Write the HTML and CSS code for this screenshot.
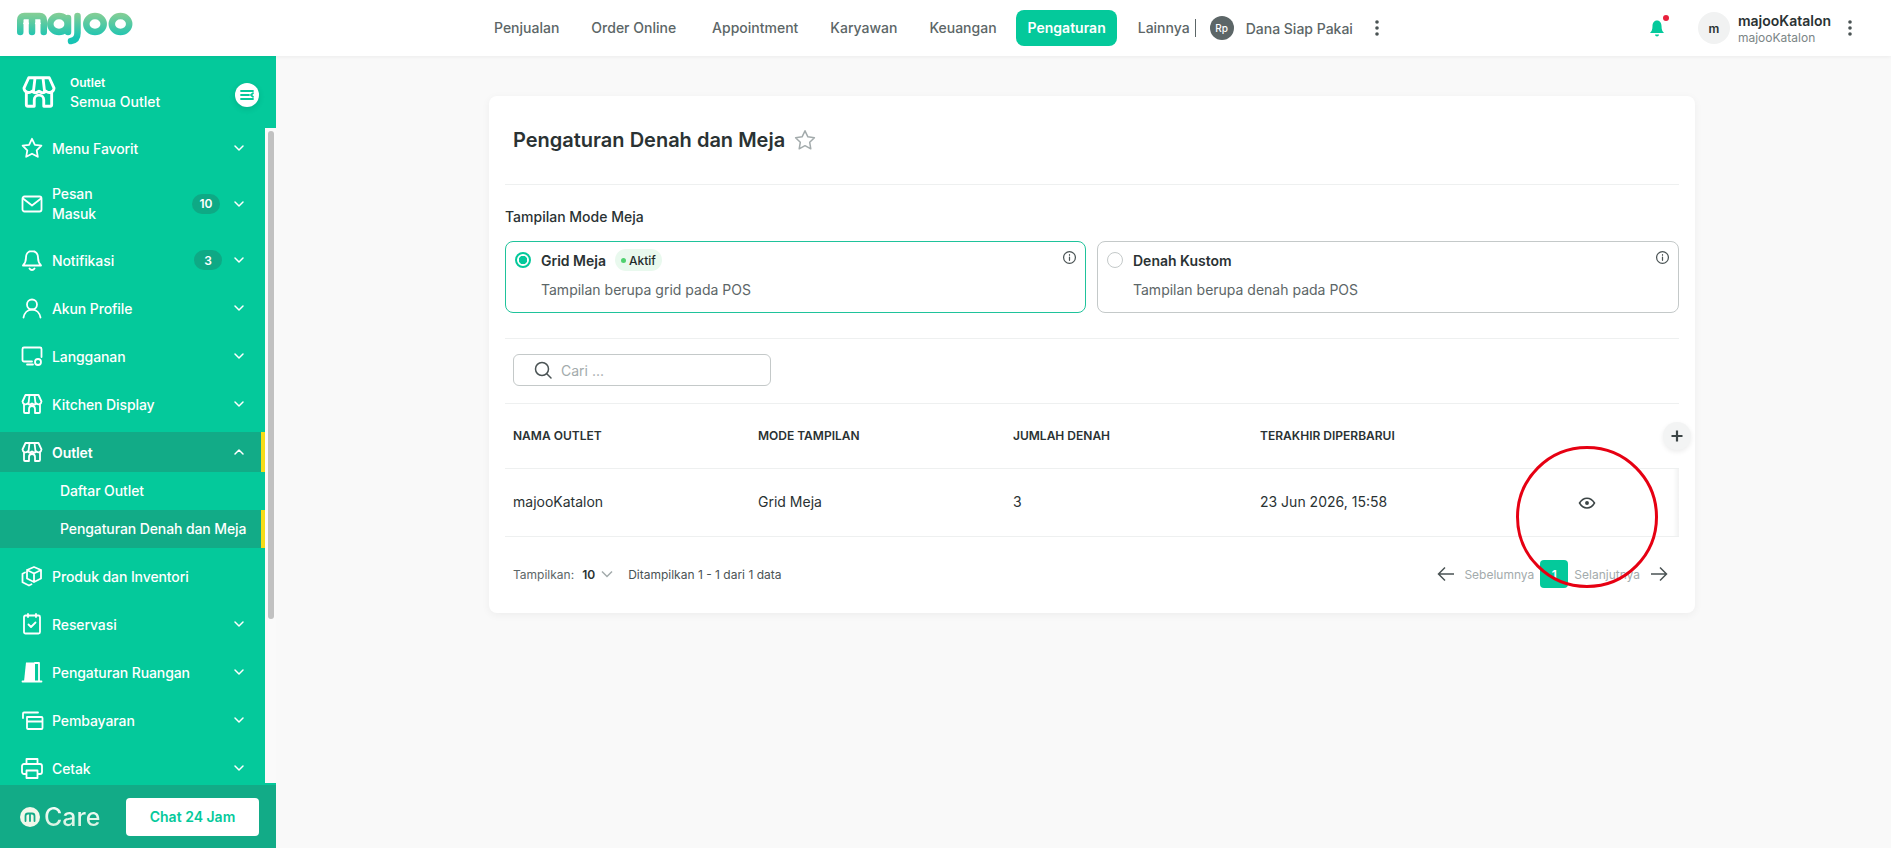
FILE: index.html
```html
<!DOCTYPE html>
<html lang="id">
<head>
    <meta charset="UTF-8">
    <meta name="viewport" content="width=device-width, initial-scale=1.0">
    <title>majoo - Pengaturan Denah dan Meja</title>
    <link rel="stylesheet" href="styles.css">
</head>
<body>
    <svg class="icon-defs" width="0" height="0" aria-hidden="true">
        <defs>
            <symbol id="i-chevron" viewBox="0 0 16 16"><path d="M4 6l4 4 4-4"/></symbol>
            <symbol id="i-store" viewBox="0 0 24 24"><path d="M5.5 3h13l3 6.500a3 3 0 0 1-5 2a3.500 3.500 0 0 1-4.500 0a3.500 3.500 0 0 1-4.500 0a3 3 0 0 1-5-2zM9.500 3l-1 8.500M14.500 3l1 8.500M4 12.500V20a1 1 0 0 0 1 1h4v-4a3 3 0 0 1 6 0v4h4a1 1 0 0 0 1-1v-7.500"/></symbol>
            <symbol id="i-dots" viewBox="0 0 6 18"><circle cx="3" cy="3" r="1.800"/><circle cx="3" cy="9" r="1.800"/><circle cx="3" cy="15" r="1.800"/></symbol>
            <symbol id="i-info" viewBox="0 0 16 16"><circle cx="8" cy="8" r="6.300"/><path d="M8 7.500v3.500M8 5v.6"/></symbol>
            <linearGradient id="logo-grad" gradientUnits="userSpaceOnUse" x1="0" y1="0" x2="0" y2="27">
                <stop offset="0" stop-color="#8fcf92"/>
                <stop offset="1" stop-color="#17c4b4"/>
            </linearGradient>
        </defs>
    </svg>

    <header class="topbar">
        <svg class="logo" width="117" height="34" viewBox="0 0 117 34" role="img" aria-label="majoo">
            <g fill="none" stroke="url(#logo-grad)" stroke-width="6.500" stroke-linecap="round">
                <path d="M3.250 21V9c0-2.500 1.500-4 4-4h15.500c2.500 0 4 1.500 4 4v12M15 8v13"/>
                <ellipse cx="42" cy="13" rx="8.700" ry="8"/>
                <path d="M51 7v14"/>
                <path d="M60.500 5v17c0 5-2.500 7.500-6.500 8"/>
                <ellipse cx="78" cy="13" rx="8.700" ry="8"/>
                <ellipse cx="103.500" cy="13" rx="8.700" ry="8"/>
            </g>
            <path d="M9.100 25V11M6.600 13l2.500-3 2.500 3M20.900 25V11M18.400 13l2.500-3 2.500 3" fill="none" stroke="#fff" stroke-width="1.600"/>
        </svg>
        <nav class="topnav">
            <a class="topnav-item">Penjualan</a>
            <a class="topnav-item">Order Online</a>
            <a class="topnav-item topnav-wide">Appointment</a>
            <a class="topnav-item">Karyawan</a>
            <a class="topnav-item">Keuangan</a>
            <a class="topnav-item active">Pengaturan</a>
            <a class="topnav-item topnav-more">Lainnya</a>
            <span class="topnav-sep"></span>
            <span class="rp-badge">Rp</span>
            <span class="dana-label">Dana Siap Pakai</span>
            <svg class="dots" width="6" height="18"><use href="#i-dots"/></svg>
        </nav>
        <div class="topbar-right">
            <div class="bell">
                <svg width="18" height="20" viewBox="0 0 18 20"><path d="M9 2.500c-3 0-4.500 2.500-4.500 5.500 0 4-1 5.500-2.500 7h14c-1.500-1.500-2.500-3-2.500-7 0-3-1.500-5.500-4.500-5.500zM7 16.500h4c0 1.300-1 2-2 2s-2-.7-2-2z"/></svg>
                <span class="bell-dot"></span>
            </div>
            <div class="avatar">m</div>
            <div class="user">
                <div class="user-name">majooKatalon</div>
                <div class="user-sub">majooKatalon</div>
            </div>
            <svg class="dots" width="6" height="18"><use href="#i-dots"/></svg>
        </div>
    </header>

    <div class="layout">
        <aside class="sidebar">
            <div class="outlet-head">
                <svg class="icon-line" width="38" height="38"><use href="#i-store"/></svg>
                <div class="outlet-text">
                    <div class="outlet-small">Outlet</div>
                    <div class="outlet-name">Semua Outlet</div>
                </div>
                <span class="outlet-toggle">
                    <svg width="14" height="14" viewBox="0 0 14 14"><path d="M1 3h12M1 7h8M1 11h12M13 5.200L11 7l2 1.800"/></svg>
                </span>
            </div>

            <div class="sidebar-body">
                <ul class="menu">
                    <li class="menu-row">
                        <svg class="menu-icon" viewBox="0 0 24 24"><path d="M12 2.800l2.900 6 6.500.9-4.700 4.600 1.100 6.500-5.800-3.100-5.800 3.100 1.100-6.500L2.600 9.700l6.500-.9z"/></svg>
                        <span class="menu-label">Menu Favorit</span>
                        <svg class="chev"><use href="#i-chevron"/></svg>
                    </li>
                    <li class="menu-row menu-tall">
                        <svg class="menu-icon" viewBox="0 0 24 24"><rect x="2.500" y="4.500" width="19" height="15" rx="2"/><path d="M3 6.500l9 7 9-7"/></svg>
                        <span class="menu-label">Pesan<br>Masuk</span>
                        <span class="count count-wide">10</span>
                        <svg class="chev"><use href="#i-chevron"/></svg>
                    </li>
                    <li class="menu-row">
                        <svg class="menu-icon" viewBox="0 0 24 24"><path d="M12 3c-3.800 0-6 3-6 6.500 0 5-1.500 6.500-3 8h18c-1.500-1.500-3-3-3-8C18 6 15.800 3 12 3zM9.500 20.500c.6 1 1.500 1.500 2.500 1.500s1.900-.5 2.500-1.500"/></svg>
                        <span class="menu-label">Notifikasi</span>
                        <span class="count">3</span>
                        <svg class="chev"><use href="#i-chevron"/></svg>
                    </li>
                    <li class="menu-row">
                        <svg class="menu-icon" viewBox="0 0 24 24"><circle cx="12" cy="8.500" r="5"/><path d="M3.500 21.500c.8-4.500 4-8 8.500-8s7.700 3.500 8.500 8"/></svg>
                        <span class="menu-label">Akun Profile</span>
                        <svg class="chev"><use href="#i-chevron"/></svg>
                    </li>
                    <li class="menu-row">
                        <svg class="menu-icon" viewBox="0 0 24 24"><path d="M12 17.500H4a1.500 1.500 0 0 1-1.500-1.500V5A1.500 1.500 0 0 1 4 3.500h16A1.500 1.500 0 0 1 21.500 5v8M7 20.500h6"/><circle cx="18" cy="18" r="3"/></svg>
                        <span class="menu-label">Langganan</span>
                        <svg class="chev"><use href="#i-chevron"/></svg>
                    </li>
                    <li class="menu-row">
                        <svg class="menu-icon"><use href="#i-store"/></svg>
                        <span class="menu-label">Kitchen Display</span>
                        <svg class="chev"><use href="#i-chevron"/></svg>
                    </li>
                    <li class="menu-group">
                        <div class="menu-row current">
                            <svg class="menu-icon"><use href="#i-store"/></svg>
                            <span class="menu-label menu-label-bold">Outlet</span>
                            <svg class="chev chev-up"><use href="#i-chevron"/></svg>
                        </div>
                        <div class="submenu-item">Daftar Outlet</div>
                        <div class="submenu-item current">Pengaturan Denah dan Meja</div>
                    </li>
                    <li class="menu-row">
                        <svg class="menu-icon" viewBox="0 0 24 24"><path d="M14 3l7 3v8.500l-7 3.500-7-3.500V6zM7 6l7 3.500L21 6M14 9.500V18M5 8.500l-2.500 1.200v8.500L9 21.500l2.500-1.200"/></svg>
                        <span class="menu-label">Produk dan Inventori</span>
                    </li>
                    <li class="menu-row">
                        <svg class="menu-icon" viewBox="0 0 24 24"><rect x="4" y="3.500" width="16" height="18" rx="1.500"/><path d="M8 2v3M16 2v3M8.500 12.500l2.500 2.500 4.500-4.500"/></svg>
                        <span class="menu-label">Reservasi</span>
                        <svg class="chev"><use href="#i-chevron"/></svg>
                    </li>
                    <li class="menu-row">
                        <svg class="menu-icon" viewBox="0 0 24 24"><path class="icon-solid" d="M4 21.500L6 2.500h9v19z"/><path d="M15 3h4v18.500M2.500 21.500h19"/></svg>
                        <span class="menu-label">Pengaturan Ruangan</span>
                        <svg class="chev"><use href="#i-chevron"/></svg>
                    </li>
                    <li class="menu-row">
                        <svg class="menu-icon" viewBox="0 0 24 24"><path d="M3 10V5.500A1 1 0 0 1 4 4.500h14M7 9h14.500a1 1 0 0 1 1 1v10a1 1 0 0 1-1 1H8a1 1 0 0 1-1-1zM7 13.500h15.500"/></svg>
                        <span class="menu-label">Pembayaran</span>
                        <svg class="chev"><use href="#i-chevron"/></svg>
                    </li>
                    <li class="menu-row">
                        <svg class="menu-icon" viewBox="0 0 24 24"><path d="M6.500 8V3h11v5M6.500 18H4a2 2 0 0 1-2-2v-6a2 2 0 0 1 2-2h16a2 2 0 0 1 2 2v6a2 2 0 0 1-2 2h-2.500M6.500 14.500h11V22h-11z"/></svg>
                        <span class="menu-label">Cetak</span>
                        <svg class="chev"><use href="#i-chevron"/></svg>
                    </li>
                </ul>
                <div class="scroll-track"><div class="scroll-thumb"></div></div>
            </div>

            <div class="care">
                <div class="care-logo">
                    <svg width="20" height="20" viewBox="0 0 20 20"><circle cx="10" cy="10" r="10" fill="#f1f8ea"/><path d="M5.500 14V9c0-1.500 1-2.500 2.500-2.500h4c1.500 0 2.500 1 2.500 2.500v5M10 8v6" fill="none" stroke="#12ab87" stroke-width="1.800" stroke-linecap="round"/></svg>
                    <span class="care-text">Care</span>
                </div>
                <button class="care-btn">Chat 24 Jam</button>
            </div>
        </aside>

        <main class="content">
            <section class="card">
                <div class="card-title">
                    <h1>Pengaturan Denah dan Meja</h1>
                    <svg class="star" width="24" height="24" viewBox="0 0 24 24"><path d="M12 2.800l2.900 6 6.500.9-4.700 4.600 1.100 6.500-5.800-3.100-5.800 3.100 1.100-6.500L2.600 9.700l6.500-.9z"/></svg>
                </div>

                <div class="mode-section">
                    <div class="mode-label">Tampilan Mode Meja</div>
                    <div class="mode-options">
                        <div class="mode-card selected">
                            <span class="radio"></span>
                            <div class="mode-body">
                                <div class="mode-head">
                                    <span class="mode-name">Grid Meja</span>
                                    <span class="status"><i></i>Aktif</span>
                                </div>
                                <div class="mode-desc">Tampilan berupa grid pada POS</div>
                            </div>
                            <svg class="info" width="15" height="15"><use href="#i-info"/></svg>
                        </div>
                        <div class="mode-card">
                            <span class="radio"></span>
                            <div class="mode-body">
                                <div class="mode-head">
                                    <span class="mode-name">Denah Kustom</span>
                                </div>
                                <div class="mode-desc">Tampilan berupa denah pada POS</div>
                            </div>
                            <svg class="info" width="15" height="15"><use href="#i-info"/></svg>
                        </div>
                    </div>
                </div>

                <div class="search-row">
                    <div class="search">
                        <svg width="20" height="20" viewBox="0 0 20 20"><circle cx="9" cy="9" r="6.500"/><path d="M14 14l4 4"/></svg>
                        <span>Cari ...</span>
                    </div>
                </div>

                <div class="table-wrap">
                    <table>
                        <thead>
                            <tr>
                                <th class="col-name">Nama Outlet</th>
                                <th class="col-mode">Mode Tampilan</th>
                                <th class="col-count">Jumlah Denah</th>
                                <th class="col-date">Terakhir Diperbarui</th>
                                <th class="col-action"></th>
                            </tr>
                        </thead>
                        <tbody>
                            <tr>
                                <td>majooKatalon</td>
                                <td>Grid Meja</td>
                                <td>3</td>
                                <td>23 Jun 2026, 15:58</td>
                                <td class="cell-action">
                                    <svg width="18" height="18" viewBox="0 0 24 24"><path d="M2 12s3.800-6.500 10-6.500S22 12 22 12s-3.800 6.500-10 6.500S2 12 2 12z"/><circle class="icon-solid" cx="12" cy="12" r="2.600"/></svg>
                                </td>
                            </tr>
                        </tbody>
                    </table>
                    <button class="add-col">
                        <svg width="14" height="14" viewBox="0 0 14 14"><path d="M7 1.500v11M1.500 7h11"/></svg>
                    </button>
                </div>

                <div class="pager-row">
                    <div class="pager-info">
                        <span>Tampilkan:</span>
                        <b>10</b>
                        <svg class="pager-chev"><use href="#i-chevron"/></svg>
                        <span class="pager-count">Ditampilkan 1 - 1 dari 1 data</span>
                    </div>
                    <div class="pager">
                        <svg class="arrow" width="20" height="20" viewBox="0 0 20 20"><path d="M18 10H3M9 3.500L2.500 10 9 16.500"/></svg>
                        <span class="pager-link">Sebelumnya</span>
                        <span class="page-num">1</span>
                        <span class="pager-link">Selanjutnya</span>
                        <svg class="arrow" width="20" height="20" viewBox="0 0 20 20"><path d="M2 10h15M11 3.500l6.500 6.500-6.500 6.500"/></svg>
                    </div>
                </div>

                <div class="highlight-ring"></div>
            </section>
        </main>
    </div>
</body>
</html>
```

FILE: styles.css
```css
* {
    box-sizing: border-box;
}
html, body {
    height: 848px;
    overflow: hidden;
}
body {
    margin: 0;
    font-family: Inter, "Noto Sans", sans-serif;
    font-size: 14px;
    color: #2a3233;
    background-color: #f9f9f9;
}
.icon-defs {
    position: absolute;
}

/* top bar */
.topbar {
    position: relative;
    z-index: 2;
    display: flex;
    align-items: center;
    height: 56px;
    padding-left: 17px;
    background-color: white;
    box-shadow: 0 1px 4px rgba(0, 0, 0, 0.06);
}
.logo {
    flex: none;
}
.topnav {
    display: flex;
    align-items: center;
    margin-left: 344px;
    color: #5c6667;
    font-weight: 500;
}
.topnav-item {
    padding: 10px 16px;
    line-height: 16px;
}
.topnav-wide {
    margin-left: 4px;
}
.topnav-item.active {
    height: 36px;
    margin-left: 3px;
    padding: 10px 11px 10px 12px;
    border-radius: 8px;
    background-color: #04c99b;
    color: white;
    font-weight: 600;
}
.topnav-more {
    padding-left: 21px;
    padding-right: 0;
}
.topnav-sep {
    width: 1px;
    height: 18px;
    margin-left: 5px;
    background-color: #5c6667;
}
.rp-badge {
    display: flex;
    align-items: center;
    justify-content: center;
    width: 24px;
    height: 24px;
    margin-left: 14px;
    border-radius: 50%;
    background-color: #5c6667;
    color: white;
    font-size: 10px;
}
.dana-label {
    margin-left: 12px;
}
.dots {
    fill: #4a5354;
    margin-left: 21px;
}
.topbar-right {
    display: flex;
    align-items: center;
    margin-left: auto;
    padding-right: 38px;
}
.bell {
    position: relative;
    width: 18px;
    height: 20px;
    margin-right: 32px;
    fill: #04c99b;
}
.bell-dot {
    position: absolute;
    top: -3px;
    right: -3px;
    width: 6px;
    height: 6px;
    border-radius: 50%;
    background-color: #e8203c;
}
.avatar {
    display: flex;
    align-items: center;
    justify-content: center;
    width: 32px;
    height: 32px;
    border-radius: 50%;
    background-color: #f1f2f2;
    font-size: 12px;
    font-weight: 600;
}
.user {
    margin-left: 8px;
}
.user-name {
    font-weight: 600;
    line-height: 18px;
}
.user-sub {
    font-size: 12px;
    line-height: 15px;
    color: #7b8586;
}
.topbar-right .dots {
    margin-left: 16px;
}

/* sidebar */
.layout {
    display: flex;
    height: 792px;
}
.sidebar {
    display: flex;
    flex: none;
    flex-direction: column;
    width: 276px;
    background-color: #04c99b;
    color: white;
}
.icon-line, .menu-icon, .outlet-toggle svg {
    fill: none;
    stroke: currentColor;
    stroke-width: 1.800;
    stroke-linecap: round;
    stroke-linejoin: round;
}
.outlet-head {
    display: flex;
    flex: none;
    align-items: center;
    height: 72px;
    padding-left: 20px;
}
.outlet-text {
    margin-left: 12px;
    padding-top: 2px;
}
.outlet-small {
    font-size: 12px;
    font-weight: 600;
    line-height: 18px;
}
.outlet-name {
    font-weight: 500;
    line-height: 20px;
}
.outlet-toggle {
    display: flex;
    align-items: center;
    justify-content: center;
    width: 24px;
    height: 24px;
    margin: 6px 17px 0 auto;
    border-radius: 50%;
    background-color: white;
    color: #04c99b;
    box-shadow: 0 2px 6px rgba(0, 0, 0, 0.12);
}
.sidebar-body {
    display: flex;
    flex: 1;
    min-height: 0;
}
.menu {
    display: flex;
    flex: 1;
    flex-direction: column;
    gap: 8px;
    min-width: 0;
    margin: 0;
    padding: 0;
    overflow: hidden;
    list-style: none;
    font-weight: 500;
    letter-spacing: -0.1px;
}
.menu-row {
    display: flex;
    flex: none;
    align-items: center;
    min-height: 40px;
    padding: 0 18px 0 20px;
}
.menu-tall {
    height: 56px;
    line-height: 20px;
}
.menu-icon {
    flex: none;
    width: 24px;
    height: 24px;
    margin-right: 8px;
}
.menu-label {
    flex: 1;
}
.menu-label-bold {
    font-weight: 600;
}
.count {
    display: flex;
    align-items: center;
    justify-content: center;
    width: 28px;
    height: 20px;
    margin-right: 9px;
    border-radius: 10px;
    background-color: #0ea985;
    font-size: 12px;
    font-weight: 600;
}
.count-wide {
    margin-right: 11px;
}
.chev {
    flex: none;
    width: 16px;
    height: 16px;
    fill: none;
    stroke: white;
    stroke-width: 1.500;
    stroke-linecap: round;
    stroke-linejoin: round;
}
.chev-up {
    transform: rotate(180deg);
}
.menu-group {
    flex: none;
}
.submenu-item {
    height: 38px;
    padding-left: 60px;
    line-height: 38px;
}
.current {
    background-color: #12ab87;
    border-right: 4px solid #f5dc17;
}
.menu-row.current {
    padding-right: 14px;
}
.icon-solid {
    fill: currentColor;
    stroke: none;
}
.scroll-track {
    flex: none;
    width: 11px;
    margin-bottom: 2px;
    padding: 3px 2px 0 3px;
    background-color: #fafafa;
}
.scroll-thumb {
    height: 488px;
    border-radius: 3px;
    background-color: #c1c1c1;
}
.care {
    display: flex;
    flex: none;
    align-items: center;
    justify-content: space-between;
    height: 63px;
    padding: 0 17px 0 20px;
    background-color: #12ab87;
}
.care-logo {
    display: flex;
    align-items: center;
    gap: 4px;
}
.care-text {
    background: linear-gradient(#ffffff, #cdeed9);
    -webkit-background-clip: text;
    background-clip: text;
    color: transparent;
    font-size: 25px;
    font-weight: 500;
    line-height: 32px;
}
.care-btn {
    width: 133px;
    height: 38px;
    border: none;
    border-radius: 4px;
    background-color: white;
    color: #04c99b;
    font-family: inherit;
    font-size: 14px;
    font-weight: 600;
}

/* content card */
.content {
    flex: 1;
    min-width: 0;
    padding: 40px 196px 0 213px;
}
.card {
    position: relative;
    height: 517px;
    padding: 0 16px;
    border-radius: 8px;
    background-color: white;
    box-shadow: 0 2px 8px rgba(0, 0, 0, 0.05);
}
.card-title {
    display: flex;
    align-items: center;
    gap: 8px;
    height: 89px;
    padding-left: 8px;
    border-bottom: 1px solid #eef0f0;
}
h1 {
    margin: 0;
    font-size: 20px;
    font-weight: 600;
}
.star {
    fill: none;
    stroke: #a3abac;
    stroke-width: 1.500;
    stroke-linejoin: round;
}
.mode-section {
    height: 154px;
    border-bottom: 1px solid #eef0f0;
}
.mode-label {
    padding-top: 23px;
    font-weight: 500;
    line-height: 17px;
}
.mode-options {
    display: grid;
    grid-template-columns: 581px 582px;
    gap: 11px;
    margin-top: 16px;
}
.mode-card {
    display: flex;
    height: 72px;
    padding: 8px 8px 0 9px;
    border: 1px solid #c4c9c9;
    border-radius: 8px;
}
.mode-card.selected {
    border-color: #1fc39b;
}
.radio {
    flex: none;
    width: 16px;
    height: 16px;
    margin-top: 2px;
    border: 1.500px solid #c4c9c9;
    border-radius: 50%;
}
.selected .radio {
    border: 2px solid #04c99b;
    background: radial-gradient(circle, #04c99b 0 4px, white 4.500px);
}
.mode-body {
    flex: 1;
    margin-left: 10px;
}
.mode-head {
    display: flex;
    align-items: center;
    gap: 9px;
    height: 20px;
}
.mode-name {
    font-weight: 600;
}
.status {
    display: flex;
    align-items: center;
    gap: 3px;
    height: 22px;
    padding: 0 6px;
    border-radius: 11px;
    background-color: #e9f9ee;
    color: #1f2a2b;
    font-size: 12px;
    font-weight: 500;
}
.status i {
    width: 5px;
    height: 5px;
    border-radius: 50%;
    background-color: #4fd16f;
}
.mode-desc {
    margin-top: 10px;
    color: #5c6667;
    line-height: 20px;
}
.info {
    flex: none;
    fill: none;
    stroke: #4a5354;
    stroke-width: 1.300;
    stroke-linecap: round;
}
.search-row {
    height: 65px;
    padding: 15px 0 0 8px;
    border-bottom: 1px solid #eef0f0;
}
.search {
    display: flex;
    align-items: center;
    gap: 8px;
    width: 258px;
    height: 32px;
    padding-left: 19px;
    border: 1px solid #c4c9c9;
    border-radius: 6px;
    color: #a3abac;
}
.search svg {
    fill: none;
    stroke: #4a5354;
    stroke-width: 1.500;
    stroke-linecap: round;
}
.table-wrap {
    position: relative;
}
table {
    width: 100%;
    border-collapse: collapse;
    table-layout: fixed;
}
th {
    height: 64px;
    padding: 0 8px;
    border-bottom: 1px solid #eef0f0;
    text-align: left;
    text-transform: uppercase;
    font-size: 12px;
    font-weight: 600;
}
td {
    height: 68px;
    padding: 0 8px;
    border-bottom: 1px solid #eef0f0;
    line-height: 20px;
}
.col-name {
    width: 245px;
}
.col-mode {
    width: 255px;
}
.col-count {
    width: 247px;
}
.col-date {
    width: 243px;
}
.cell-action {
    text-align: center;
    background: linear-gradient(to right, white 178px, #f1f2f2);
}
.cell-action svg {
    display: inline-block;
    vertical-align: middle;
    color: #3c4546;
    fill: none;
    stroke: currentColor;
    stroke-width: 2;
}
.add-col {
    position: absolute;
    top: 18px;
    right: -12px;
    display: flex;
    align-items: center;
    justify-content: center;
    width: 28px;
    height: 28px;
    padding: 0;
    border: none;
    border-radius: 50%;
    background-color: #f3f4f4;
    box-shadow: 0 2px 5px rgba(0, 0, 0, 0.08);
}
.add-col svg {
    fill: none;
    stroke: #3c4546;
    stroke-width: 2.200;
}
.pager-row {
    display: flex;
    align-items: center;
    justify-content: space-between;
    height: 75px;
    padding: 0 10px 0 8px;
    font-size: 12px;
}
.pager-info {
    display: flex;
    align-items: center;
    color: #5c6667;
}
.pager-info b {
    margin-left: 8px;
    color: #2a3233;
    font-weight: 600;
}
.pager-chev {
    width: 20px;
    height: 20px;
    margin-left: 2px;
    fill: none;
    stroke: #a3abac;
    stroke-width: 1.200;
}
.pager-count {
    margin-left: 11px;
    color: #4a5354;
}
.pager {
    display: flex;
    align-items: center;
}
.pager-link {
    color: #a3abac;
}
.page-num {
    display: flex;
    align-items: center;
    justify-content: center;
    width: 28px;
    height: 28px;
    margin: 0 6px;
    border-radius: 4px;
    background-color: #04c99b;
    color: white;
    font-weight: 600;
}
.arrow {
    fill: none;
    stroke: #4a5354;
    stroke-width: 1.500;
}
.arrow:first-child {
    margin-right: 8px;
}
.arrow:last-child {
    margin-left: 9px;
}
.highlight-ring {
    position: absolute;
    top: 350px;
    left: 1027px;
    width: 142px;
    height: 142px;
    border: 3px solid #e60012;
    border-radius: 50%;
    pointer-events: none;
}
```
